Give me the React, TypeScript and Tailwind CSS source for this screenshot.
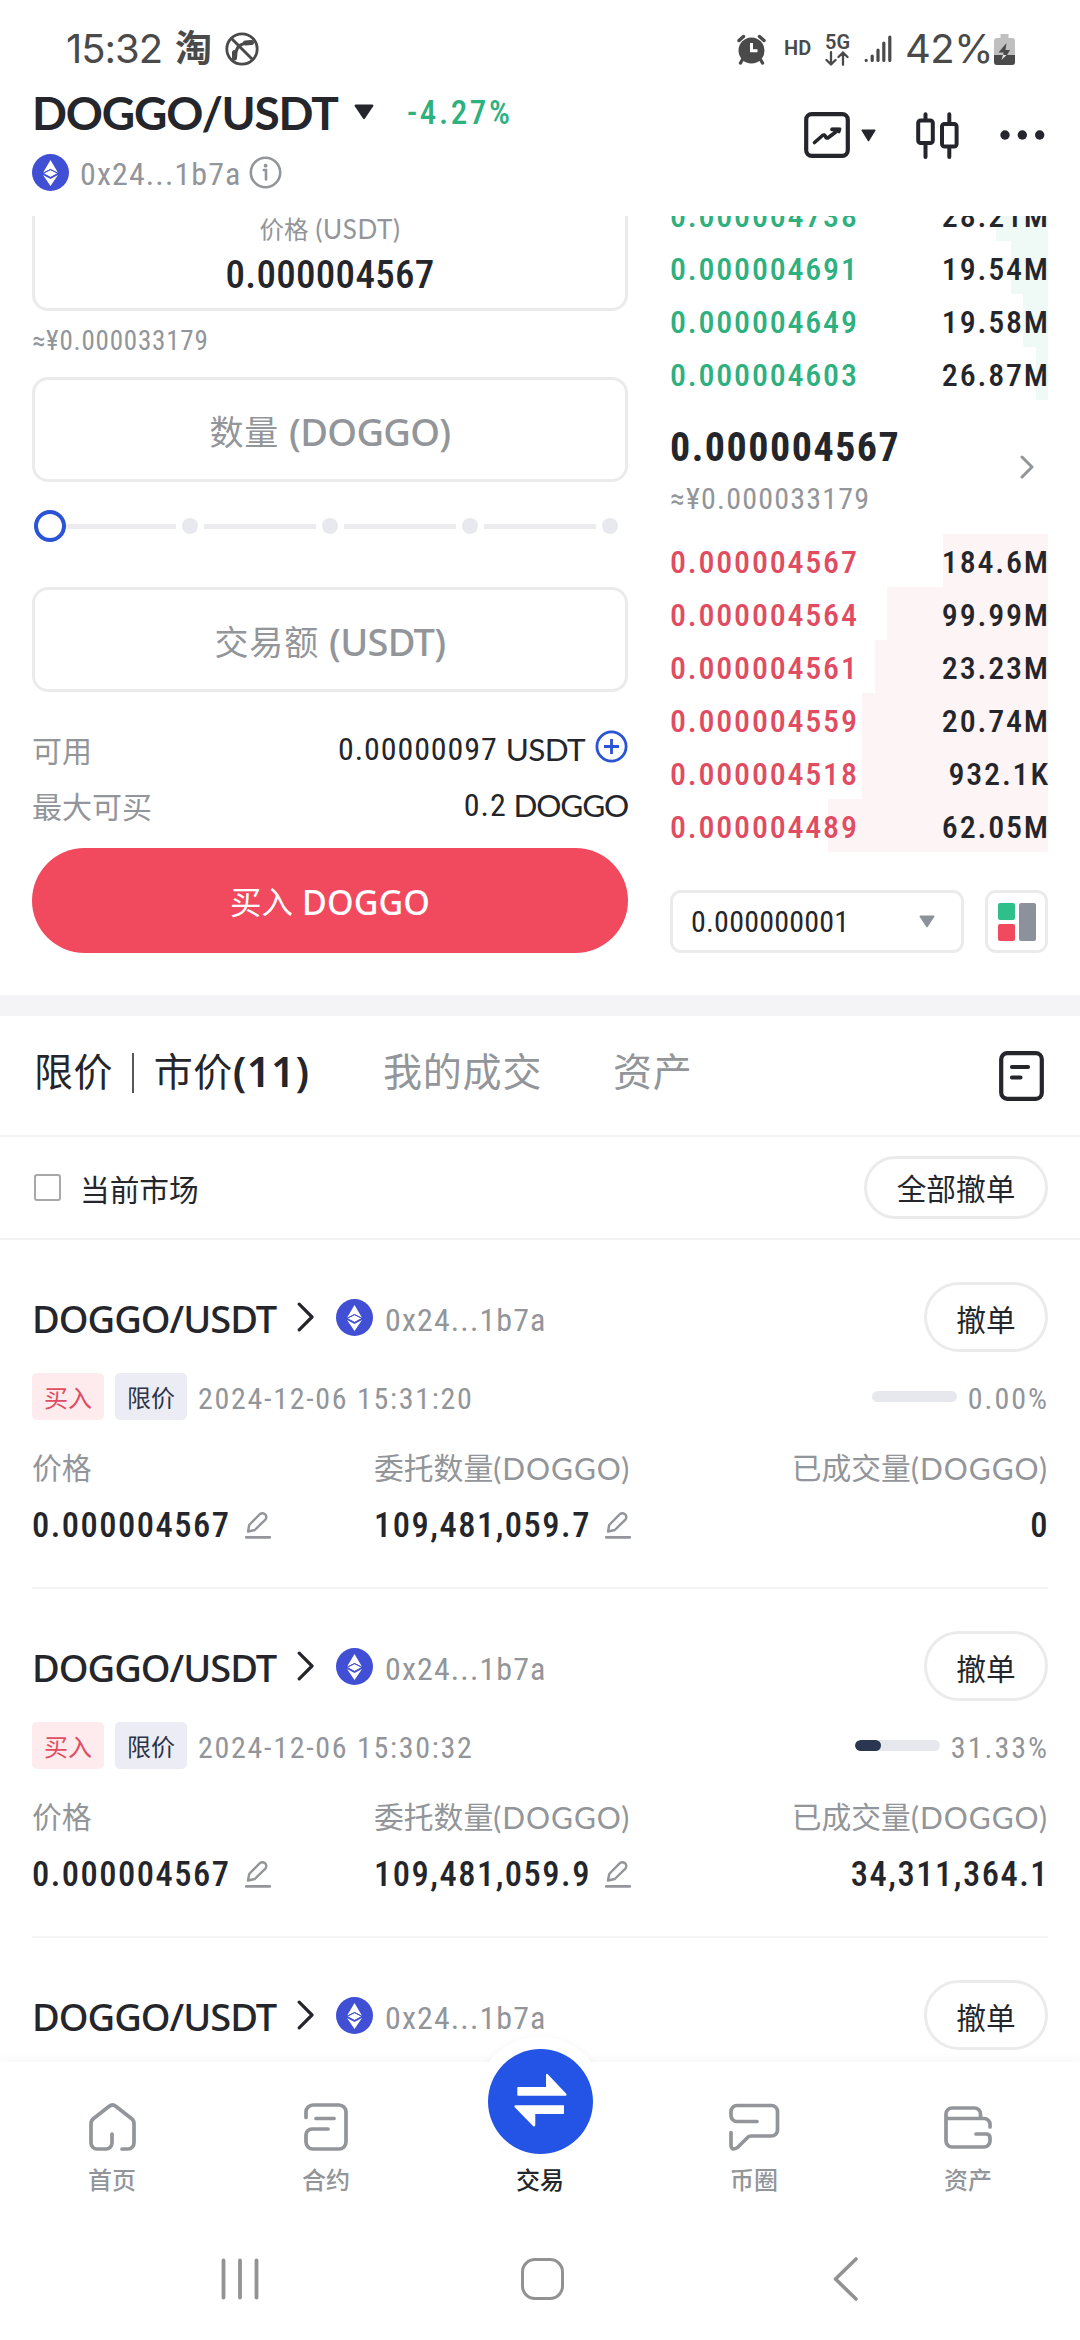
import type { ReactNode } from "react";
import clsx from "clsx";

const NUM = "font-['Roboto','Noto_Sans_CJK_SC',sans-serif] [font-stretch:75%]";
const LAT = "font-['Lato','Noto_Sans_CJK_SC',sans-serif]";
const MED = "font-['Noto_Sans','Noto_Sans_CJK_SC',sans-serif]";
const CJK = "font-['Roboto','Noto_Sans_CJK_SC',sans-serif]";

/* ---------- icons ---------- */

function EthIcon() {
  return (
    <svg className="h-[37px] w-[37px] shrink-0" viewBox="0 0 37 37">
      <circle cx="18.5" cy="18.5" r="18.5" fill="#404fd4" />
      <path d="M18.5 6 L26 18.8 L18.5 15 L11 18.8Z" fill="#fff" />
      <path d="M18.5 16 L25.6 19.4 L18.5 23.3 L11.4 19.4Z" fill="#fff" />
      <path d="M11 21 L18.5 25 L26 21 L18.5 32Z" fill="#fff" />
      <path d="M11 19.4 L18.5 15.6 L26 19.4 L18.5 23.4Z" fill="none" stroke="#404fd4" strokeWidth="1" />
    </svg>
  );
}

function EditIcon() {
  return (
    <svg className="h-[27px] w-[26px] shrink-0" viewBox="0 0 26 27" fill="none" stroke="#929599" strokeWidth="2.4" strokeLinecap="round" strokeLinejoin="round">
      <path d="M3 19.5 L4.2 13 L14.6 2.4 Q17.2 0.4 20 2.2 Q22.4 4.6 20.4 7.6 L9.8 18 Z" />
      <path d="M1.2 25.4 H24.8" strokeWidth="2.6" />
    </svg>
  );
}

function Caret({ className, fill }: { className: string; fill: string }) {
  return (
    <svg className={className} viewBox="0 0 20 16" preserveAspectRatio="none">
      <path d="M1.6 0.5 H18.4 Q20 0.8 19.2 2.2 L11 14.6 Q10 16 9 14.6 L0.8 2.2 Q0 0.8 1.6 0.5Z" fill={fill} />
    </svg>
  );
}

/* ---------- status bar and header ---------- */

function StatusBar() {
  return (
    <div className="flex h-[88px] shrink-0 items-center justify-between pt-[10px] pr-[65px] pl-[66px] text-[#4a4a4a]">
      <div className="flex items-center">
        <span className="w-[109px] font-['Inter',sans-serif] text-[40px] leading-[50px] font-normal tracking-[-1px]">15:32</span>
        <span className="-mt-[6px] w-[50px] font-['Noto_Sans_CJK_SC',sans-serif] text-[37px] leading-[50px] font-bold">淘</span>
        <svg className="h-[34px] w-[34px]" viewBox="0 0 34 34" fill="none" stroke="#4a4a4a">
          <circle cx="17" cy="17" r="15.2" strokeWidth="2.8" />
          <path d="M6.5 6.5 L27.5 27.5" strokeWidth="3" />
          <path d="M10.5 25 Q10 14 19 11.5 Q24 10 26.5 10.5" strokeWidth="3.2" />
          <path d="M9.5 20.5 V26 M20.5 11 L26.5 10.5" strokeWidth="5" strokeLinecap="round" />
        </svg>
      </div>
      <div className="flex items-center">
        <svg className="h-[31px] w-[29px]" viewBox="0 0 29 31">
          <circle cx="14.5" cy="16.5" r="13" fill="#4a4a4a" />
          <path d="M2 6.5 L6.5 2.5 M27 6.5 L22.5 2.5 M5.5 25.5 L3.5 29 M23.5 25.5 L25.5 29" stroke="#4a4a4a" strokeWidth="3.4" strokeLinecap="round" />
          <path d="M14.5 9 V16.8 H20.5" fill="none" stroke="#fff" strokeWidth="3" />
        </svg>
        <span className="-mt-[3px] ml-[18px] w-[41px] font-['Roboto',sans-serif] text-[20px] leading-[24px] font-semibold">HD</span>
        <div className="flex w-[39px] flex-col">
          <span className="font-['Roboto',sans-serif] text-[20px] leading-[18px] font-semibold">5G</span>
          <svg className="h-[15px] w-[24px]" viewBox="0 0 24 15" fill="none" stroke="#4a4a4a" strokeWidth="2.3" strokeLinecap="round" strokeLinejoin="round">
            <path d="M6 1.2 V13.5 M1.5 9 L6 13.5 L10.5 9 M18 13.8 V1.5 M13.5 6 L18 1.5 L22.5 6" />
          </svg>
        </div>
        <svg className="h-[28px] w-[28px]" viewBox="0 0 28 28" stroke="#4a4a4a" strokeWidth="3.2" strokeLinecap="round">
          <path d="M2.2 25.3 V25.5 M8.2 21 V25.5 M14 15 V25.5 M19.8 8 V25.5 M25.8 2.2 V25.5" />
        </svg>
        <span className="ml-[13px] w-[89px] font-['Inter',sans-serif] text-[40px] leading-[50px] font-normal tracking-[-0.5px]">42%</span>
        <svg className="h-[31px] w-[21px]" viewBox="0 0 21 31">
          <path d="M6.5 0 H14.5 V4 H18 Q21 4 21 7 V28 Q21 31 18 31 H3 Q0 31 0 28 V7 Q0 4 3 4 H6.5Z" fill="#bfbfbf" />
          <path d="M0 21 H21 V28 Q21 31 18 31 H3 Q0 31 0 28Z" fill="#4a4a4a" />
          <path d="M12.5 9 L4.5 18.5 H9.5 V21 H13 L16 16 H11.5Z" fill="#4a4a4a" />
          <path d="M9 21 H12.5 L7.5 26Z" fill="#e5e5e5" />
        </svg>
      </div>
    </div>
  );
}

function Header() {
  return (
    <header className="flex h-[128px] shrink-0 justify-between">
      <div className="pl-[32px]">
        <div className="flex h-[50px] items-center">
          <h1 className={clsx(LAT, "w-[322px] text-[46px] leading-[50px] font-bold tracking-[-1.2px] text-[#24262b]")}>DOGGO/USDT</h1>
          <Caret className="-mt-[3px] h-[16px] w-[20px]" fill="#24262b" />
          <span className={clsx(NUM, "ml-[33px] text-[33px] leading-[50px] font-medium tracking-[2.6px] text-[#2eb07f]")}>-4.27%</span>
        </div>
        <div className="mt-[16px] flex h-[37px] items-center">
          <EthIcon />
          <span className={clsx(NUM, "ml-[11px] w-[169px] pt-[3px] text-[32px] leading-[36px] tracking-[1.1px] text-[#929599]")}>0x24...1b7a</span>
          <svg className="h-[33px] w-[33px]" viewBox="0 0 33 33" fill="none" stroke="#929599" strokeLinecap="round">
            <circle cx="16.5" cy="16.5" r="14.7" strokeWidth="2.6" />
            <path d="M14.8 14 H17 V23.5" strokeWidth="2.6" />
            <path d="M16.6 9.6 V9.7" strokeWidth="3.8" />
          </svg>
        </div>
      </div>
      <div className="flex h-[94px] items-center pr-[35px]">
        <svg className="h-[46px] w-[46px]" viewBox="0 0 46 46" fill="none" stroke="#24262b" strokeLinecap="round" strokeLinejoin="round">
          <rect x="2.2" y="2.2" width="41.6" height="41.6" rx="5.5" strokeWidth="4.2" />
          <path d="M10.5 30.5 L18.5 23.5 Q20.5 22 21.5 24.5 Q22.5 27 24.5 25.5 L35 17.5 H28" strokeWidth="3.6" />
          <path d="M28 17 H36 L35 20" strokeWidth="2.8" />
        </svg>
        <Caret className="ml-[11px] h-[13px] w-[15px]" fill="#24262b" />
        <svg className="ml-[40px] h-[47px] w-[43px]" viewBox="0 0 43 47" fill="none" stroke="#24262b" strokeWidth="4" strokeLinecap="round">
          <rect x="2.2" y="8.5" width="14.6" height="22.5" rx="2.5" />
          <path d="M9.5 2.2 V8 M9.5 31 V45" />
          <rect x="26" y="12" width="14.6" height="22.5" rx="2.5" />
          <path d="M33.3 2.2 V11 M33.3 35 V45" />
        </svg>
        <svg className="ml-[41px] h-[10px] w-[45px]" viewBox="0 0 45 10" fill="#24262b">
          <circle cx="5" cy="5" r="4.7" />
          <circle cx="22.3" cy="5" r="4.7" />
          <circle cx="39.7" cy="5" r="4.7" />
        </svg>
      </div>
    </header>
  );
}

/* ---------- order form ---------- */

function Field({ label, unit, className }: { label: string; unit: string; className: string }) {
  return (
    <div className={clsx("flex h-[105px] items-center justify-center rounded-[16px] border-[3px] border-[#ebebec] text-[#929599]", className)}>
      <span className={clsx(CJK, "pt-[6px] text-[34px] leading-[50px] tracking-[0.8px]")}>{label}</span>
      <span className={clsx(MED, "ml-[10px] pt-[2px] text-[38px] leading-[50px] font-medium tracking-[-0.7px]")}>({unit})</span>
    </div>
  );
}

function Slider() {
  return (
    <div className="flex h-[88px] items-center pl-[2px] pr-[10px]">
      <span className="h-[32px] w-[32px] shrink-0 rounded-full border-[4px] border-[#2a53d5]" />
      {[0, 1, 2, 3].map((i) => (
        <div key={i} className={clsx("flex items-center", i === 0 ? "w-[132px]" : "flex-1")}>
          <span className={clsx("h-[5px] flex-1 bg-[#ececef]", i > 0 && "ml-[6px]")} />
          <span className="ml-[6px] h-[16px] w-[16px] rounded-full bg-[#e8e9ee]" />
        </div>
      ))}
    </div>
  );
}

function InfoRow({ label, value, unit, unitClass, children }: { label: string; value: string; unit: string; unitClass: string; children?: ReactNode }) {
  return (
    <div className="flex h-[56px] items-center">
      <span className={clsx(CJK, "flex-1 pt-[5px] text-[30px] leading-[44px] text-[#929599]")}>{label}</span>
      <span className={clsx(NUM, "text-[32px] leading-[44px] tracking-[0.9px] text-[#24262b]")}>{value}</span>
      <span className={clsx(LAT, "text-[31.5px] leading-[44px] text-[#24262b]", unitClass)}>{unit}</span>
      {children}
    </div>
  );
}

function OrderForm() {
  return (
    <section className="ml-[32px] flex w-[596px] flex-col">
      <div className="flex h-[95px] flex-col items-center rounded-b-[16px] border-[3px] border-t-0 border-[#ebebec]">
        <div className="flex h-[27px] items-center text-[#929599]">
          <span className={clsx(CJK, "pt-px text-[24.5px] leading-[27px]")}>价格</span>
          <span className={clsx(LAT, "ml-[7px] text-[26px] leading-[27px] tracking-[0.6px]")}>(USDT)</span>
        </div>
        <span className={clsx(NUM, "pt-px text-[39px] leading-[62px] font-medium tracking-[0.3px] text-[#24262b]")}>0.000004567</span>
      </div>
      <span className={clsx(NUM, "h-[58px] text-[27px] leading-[60px] tracking-[0.8px] text-[#929599]")}>≈¥0.000033179</span>
      <Field label="数量" unit="DOGGO" className="mt-[8px]" />
      <Slider />
      <Field label="交易额" unit="USDT" className="mt-[17px]" />
      <div className="mt-[29px]">
        <InfoRow label="可用" value="0.00000097" unit="USDT" unitClass="ml-[8px] tracking-[-0.6px]">
          <svg className="-mt-[6px] ml-[10px] h-[33px] w-[33px]" viewBox="0 0 33 33" fill="none" stroke="#2a53d5" strokeWidth="2.8">
            <circle cx="16.5" cy="16.5" r="14.6" />
            <path d="M9 16.5 H24 M16.5 9 V24" />
          </svg>
        </InfoRow>
        <InfoRow label="最大可买" value="0.2" unit="DOGGO" unitClass="ml-[7px] tracking-[-1.2px]" />
      </div>
      <button className="mt-[15px] flex h-[105px] items-center justify-center rounded-full bg-[#f1495e] text-white">
        <span className={clsx(CJK, "pt-[6px] text-[31.5px] leading-[50px]")}>买入</span>
        <span className={clsx(MED, "ml-[9px] pt-[2px] text-[34px] leading-[50px] font-medium tracking-[0.1px]")}>DOGGO</span>
      </button>
    </section>
  );
}

/* ---------- order book ---------- */

const bids = [
  { price: "0.000004738", amount: "28.21M", depth: 52 },
  { price: "0.000004691", amount: "19.54M", depth: 37 },
  { price: "0.000004649", amount: "19.58M", depth: 25 },
  { price: "0.000004603", amount: "26.87M", depth: 12 },
];

const asks = [
  { price: "0.000004567", amount: "184.6M", depth: 105 },
  { price: "0.000004564", amount: "99.99M", depth: 161 },
  { price: "0.000004561", amount: "23.23M", depth: 173 },
  { price: "0.000004559", amount: "20.74M", depth: 186 },
  { price: "0.000004518", amount: "932.1K", depth: 186 },
  { price: "0.000004489", amount: "62.05M", depth: 220 },
];

function BookRow({ price, amount, depth, side }: { price: string; amount: string; depth: number; side: "bid" | "ask" }) {
  return (
    <div className={clsx(NUM, "relative flex h-[53px] shrink-0 items-center justify-between pt-[4px] text-[32px] leading-[49px] font-medium tracking-[1.8px]")}>
      <span className={clsx("absolute inset-y-0 right-0", side === "bid" ? "bg-[#effaf6]" : "bg-[#fdf4f5]")} style={{ width: depth }} />
      <span className={clsx("relative", side === "bid" ? "text-[#2eb07f]" : "text-[#e04d62]")}>{price}</span>
      <span className="relative -mr-[1.8px] text-[#24262b]">{amount}</span>
    </div>
  );
}

function OrderBook() {
  return (
    <section className="ml-[42px] flex w-[378px] flex-col">
      <div className="-mt-[28px] flex flex-col">
        {bids.map((r) => (
          <BookRow key={r.price} {...r} side="bid" />
        ))}
      </div>
      <div className="flex h-[134px] items-center justify-between pr-[14px]">
        <div className="flex flex-col pt-[11px]">
          <span className={clsx(NUM, "text-[40px] leading-[52px] font-bold tracking-[1.5px] text-[#24262b]")}>0.000004567</span>
          <span className={clsx(NUM, "text-[30px] leading-[50px] tracking-[1.2px] text-[#929599]")}>≈¥0.000033179</span>
        </div>
        <svg className="h-[24px] w-[14px]" viewBox="0 0 14 24" fill="none" stroke="#929599" strokeWidth="3" strokeLinecap="round" strokeLinejoin="round">
          <path d="M2 2 L12 12 L2 22" />
        </svg>
      </div>
      {asks.map((r) => (
        <BookRow key={r.price} {...r} side="ask" />
      ))}
      <div className="mt-[38px] flex justify-between">
        <div className="flex h-[63px] w-[294px] items-center justify-between rounded-[11px] border-[3px] border-[#ebebec] pl-[18px] pr-[26px]">
          <span className={clsx(NUM, "text-[30px] leading-[50px] tracking-[0.2px] text-[#24262b]")}>0.000000001</span>
          <Caret className="h-[13px] w-[16px]" fill="#8c919b" />
        </div>
        <div className="flex h-[63px] w-[63px] items-center justify-center rounded-[11px] border-[3px] border-[#ebebec]">
          <div className="grid grid-cols-2 grid-rows-2 gap-[4px]">
            <span className="h-[17px] w-[17px] rounded-[2px] bg-[#2fbf8b]" />
            <span className="row-span-2 w-[17px] rounded-[2px] bg-[#8c919b]" />
            <span className="h-[17px] w-[17px] rounded-[2px] bg-[#f1495e]" />
          </div>
        </div>
      </div>
    </section>
  );
}

/* ---------- order list ---------- */

function Tabs() {
  return (
    <div className={clsx(CJK, "flex h-[121px] shrink-0 items-start border-b-2 border-[#f3f3f4] pl-[34px] pr-[36px] pt-[27px] text-[39px] leading-[60px] text-[#929599]")}>
      <div className="flex w-[349px] text-[#24262b]">
        <span className="tracking-[0.4px]">限价</span>
        <span className="mr-[20px] ml-[19px] mt-[10px] h-[40px] w-[2px] bg-[#55575b]" />
        <span className="tracking-[0.4px]">市价</span>
        <span className={clsx(MED, "-mt-[2px] text-[42px] font-semibold tracking-[0.4px]")}>(11)</span>
      </div>
      <span className="w-[230px] tracking-[0.8px]">我的成交</span>
      <span className="flex-1 tracking-[0.8px]">资产</span>
      <svg className="mt-[8px] h-[50px] w-[45px]" viewBox="0 0 45 50" fill="none" stroke="#24262b" strokeWidth="4.2" strokeLinecap="round">
        <rect x="2.2" y="2.2" width="40.6" height="45.6" rx="6" />
        <path d="M13 16 H29 M13 26.5 H21.5" />
      </svg>
    </div>
  );
}

function Filter() {
  return (
    <div className={clsx(CJK, "flex h-[103px] shrink-0 items-center border-b-2 border-[#f3f3f4] px-[32px] text-[29.7px] text-[#24262b]")}>
      <span className="ml-[2px] h-[27px] w-[27px] rounded-[3px] border-2 border-[#a6a8ab]" />
      <span className="ml-[19px] flex-1 pt-[7px] leading-[44px]">当前市场</span>
      <button className="flex h-[63px] w-[184px] items-center justify-center rounded-full border-[3px] border-[#ebebec] pt-[6px]">全部撤单</button>
    </div>
  );
}

type Order = { time: string; percent: number; amount: string; filled: string };

const orders: Order[] = [
  { time: "2024-12-06 15:31:20", percent: 0, amount: "109,481,059.7", filled: "0" },
  { time: "2024-12-06 15:30:32", percent: 31.33, amount: "109,481,059.9", filled: "34,311,364.1" },
];

function ColumnTitle({ text, unit }: { text: string; unit?: string }) {
  return (
    <div className="flex items-center">
      <span className={clsx(CJK, "pt-[2px] text-[29.8px] leading-[48px]")}>{text}</span>
      {unit && <span className={clsx(LAT, "text-[30px] leading-[48px] tracking-[1px]")}>{unit}</span>}
    </div>
  );
}

function OrderHead() {
  return (
    <div className="flex h-[70px] shrink-0 items-center">
      <span className={clsx(MED, "w-[265px] pt-[2px] text-[38px] leading-[50px] font-medium tracking-[-1px] text-[#24262b]")}>DOGGO/USDT</span>
      <svg className="h-[30px] w-[17px]" viewBox="0 0 17 30" fill="none" stroke="#24262b" strokeWidth="3.2" strokeLinecap="round" strokeLinejoin="round">
        <path d="M2.2 2.2 L15 15 L2.2 27.8" />
      </svg>
      <span className="ml-[22px] flex">
        <EthIcon />
      </span>
      <span className={clsx(NUM, "ml-[12px] flex-1 pt-[5px] text-[32px] leading-[50px] tracking-[1.1px] text-[#929599]")}>0x24...1b7a</span>
      <button className={clsx(CJK, "flex h-[70px] w-[124px] items-center justify-center rounded-full border-[3px] border-[#ebebec] pt-[8px] text-[29.7px] text-[#24262b]")}>撤单</button>
    </div>
  );
}

function OrderCard({ order }: { order: Order }) {
  return (
    <article className="mx-[32px] flex h-[349px] shrink-0 flex-col border-b-2 border-[#f4f4f5] pt-[42px]">
      <OrderHead />
      <div className="mt-[21px] flex h-[47px] items-center">
        <span className={clsx(CJK, "flex h-[47px] w-[72px] items-center justify-center rounded-[5px] bg-[#feebed] pt-[5px] text-[24px] text-[#e04d62]")}>买入</span>
        <span className={clsx(CJK, "ml-[11px] flex h-[47px] w-[72px] items-center justify-center rounded-[5px] bg-[#ecedf4] pt-[5px] text-[24px] text-[#2d3348]")}>限价</span>
        <span className={clsx(NUM, "ml-[11px] flex-1 pt-[4px] text-[30px] leading-[43px] tracking-[1.7px] text-[#929599]")}>{order.time}</span>
        <span className="h-[11px] w-[85px] overflow-hidden rounded-full bg-[#e7e8ed]">
          <span className="block h-full rounded-full bg-[#2b3750]" style={{ width: `${order.percent}%` }} />
        </span>
        <span className={clsx(NUM, "-mr-px ml-[11px] pt-[4px] text-[30px] leading-[43px] tracking-[2px] text-[#929599]")}>{order.percent.toFixed(2)}%</span>
      </div>
      <div className="mt-[24px] flex h-[48px] items-center text-[#929599]">
        <div className="w-[342px]">
          <ColumnTitle text="价格" />
        </div>
        <div className="flex-1">
          <ColumnTitle text="委托数量" unit="(DOGGO)" />
        </div>
        <ColumnTitle text="已成交量" unit="(DOGGO)" />
      </div>
      <div className={clsx(NUM, "mt-[8px] flex h-[49px] items-center pt-px text-[34.5px] leading-[49px] font-medium tracking-[1.5px] text-[#24262b]")}>
        <div className="flex w-[342px] items-center">
          <span className="w-[213px]">0.000004567</span>
          <EditIcon />
        </div>
        <div className="flex flex-1 items-center">
          <span className="w-[231px]">{order.amount}</span>
          <EditIcon />
        </div>
        <span className="-mr-px">{order.filled}</span>
      </div>
    </article>
  );
}

/* ---------- bottom navigation ---------- */

function NavItem({ label, active, children }: { label: string; active?: boolean; children: ReactNode }) {
  return (
    <div className="flex flex-1 flex-col items-center">
      <div className={clsx("flex h-[92px] items-end justify-center", active ? "" : "pb-[3px]")}>{children}</div>
      <span className={clsx(CJK, "mt-[10px] text-[24px] leading-[34px] font-medium", active ? "text-[#24262b]" : "text-[#929599]")}>{label}</span>
    </div>
  );
}

function BottomNav() {
  const line = { fill: "none", stroke: "#929599", strokeWidth: 3.7, strokeLinecap: "round", strokeLinejoin: "round" } as const;
  return (
    <nav className="relative h-[278px] shrink-0">
      <span className="absolute -top-[25px] left-[475px] h-[130px] w-[130px] rounded-full bg-white shadow-[0_0_10px_rgba(0,0,0,0.04)]" />
      <span className="absolute inset-0 bg-white shadow-[0_-2px_10px_rgba(0,0,0,0.04)]" />
      <span className="absolute -top-[25px] left-[475px] h-[130px] w-[130px] rounded-full bg-white" />
      <div className="relative flex px-[5px]">
        <NavItem label="首页">
          <svg className="h-[48px] w-[47px]" viewBox="0 0 47 48" {...line}>
            <path d="M23 31 V40 a6 6 0 0 1 -6 6 H8 a6 6 0 0 1 -6 -6 V20.5 q0 -3 2.3 -4.8 L20.2 3.2 q3.3 -2.4 6.6 0 L42.7 15.7 q2.3 1.8 2.3 4.8 V40 a6 6 0 0 1 -6 6 H33" />
          </svg>
        </NavItem>
        <NavItem label="合约">
          <svg className="h-[48px] w-[44px]" viewBox="0 0 44 48" {...line}>
            <path d="M2 14.5 V9 a7 7 0 0 1 7 -7 H35 a7 7 0 0 1 7 7 V39 a7 7 0 0 1 -7 7 H9 a7 7 0 0 1 -7 -7 V32 a6 6 0 0 1 6 -6 H24 M12 15.5 H30" />
          </svg>
        </NavItem>
        <NavItem label="交易" active>
          <svg className="-mt-[13px] h-[105px] w-[105px]" viewBox="0 0 105 105">
            <circle cx="52.5" cy="52.5" r="52.5" fill="#2354e6" />
            <path d="M30 38 H58 V26 Q58.5 24 60 25.5 L78.5 45 Q79 46.7 77.5 46.7 H30 Q29.3 46.7 29.3 46 V38.7 Q29.3 38 30 38Z" fill="#fff" />
            <path d="M75.3 65 H47.3 V76 Q46.8 78.5 45 77 L26.5 58 Q26 56.3 27.5 56.3 H75.3 Q76 56.3 76 57 V64.3 Q76 65 75.3 65Z" fill="#fff" />
          </svg>
        </NavItem>
        <NavItem label="币圈">
          <svg className="h-[48px] w-[51px]" viewBox="0 0 51 48" {...line}>
            <path d="M28 18.5 H8 a6 6 0 0 1 -6 -6 V8.5 a6 6 0 0 1 6 -6 H42.5 a6 6 0 0 1 6 6 V27 a6 6 0 0 1 -6 6 H22 q-2 0 -3.4 1.5 L8.5 44.5 Q2 48.5 2 41.5 V29.5" />
          </svg>
        </NavItem>
        <NavItem label="资产">
          <svg className="h-[48px] w-[48px]" viewBox="0 0 48 48" {...line}>
            <path d="M46 24 V21.5 a6 6 0 0 0 -6 -6 H2 M36.5 15.5 V11 a6 6 0 0 0 -6 -6 H8 a6 6 0 0 0 -6 6 V38 a6 6 0 0 0 6 6 H40 a6 6 0 0 0 6 -6 V35 q0 -4 -4 -4 H32" />
          </svg>
        </NavItem>
      </div>
      <div className="relative mt-[59px] flex h-[44px] items-center justify-between pl-[221px] pr-[222px]">
        <svg className="h-[42px] w-[38px]" viewBox="0 0 38 42" stroke="#929292" strokeWidth="3.8" strokeLinecap="round">
          <path d="M2.5 2.5 V39.5 M19 2.5 V39.5 M35.5 2.5 V39.5" />
        </svg>
        <span className="mr-[8px] h-[42px] w-[43px] rounded-[14px] border-[3.5px] border-[#929292]" />
        <svg className="h-[44px] w-[25px]" viewBox="0 0 25 44" fill="none" stroke="#929292" strokeWidth="3.6" strokeLinecap="round" strokeLinejoin="round">
          <path d="M23 2 L2.5 22 L23 42" />
        </svg>
      </div>
    </nav>
  );
}

export default function App() {
  return (
    <div className="flex h-[2340px] w-[1080px] flex-col overflow-hidden bg-white">
      <StatusBar />
      <Header />
      <main className="flex h-[779px] shrink-0 overflow-hidden">
        <OrderForm />
        <OrderBook />
      </main>
      <div className="h-[21px] shrink-0 bg-[#f4f4f6]" />
      <Tabs />
      <Filter />
      <div className="flex h-[822px] shrink-0 flex-col overflow-hidden">
        {orders.map((o) => (
          <OrderCard key={o.time} order={o} />
        ))}
        <div className="mx-[32px] pt-[42px]">
          <OrderHead />
        </div>
      </div>
      <BottomNav />
    </div>
  );
}
